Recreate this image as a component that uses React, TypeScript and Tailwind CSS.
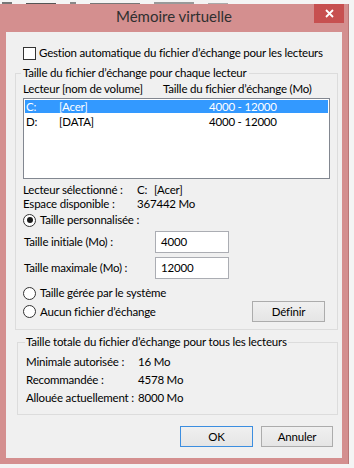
const ui = "font-['Lato',sans-serif] text-[11.5px] tracking-[-0.2px] text-black"

const Radio = ({ checked = false }: { checked?: boolean }) => (
  <span className="w-[13px] h-[13px] rounded-full border border-[#333] bg-white flex items-center justify-center shrink-0">
    {checked && <span className="w-[6px] h-[6px] rounded-full bg-[#1a1a1a]" />}
  </span>
)

const Button = ({ label, focused = false, w }: { label: string; focused?: boolean; w: string }) => (
  <button
    className={`${w} h-[21px] border ${
      focused ? "border-[#3c8ee0]" : "border-[#acacac]"
    } bg-gradient-to-b from-[#f0f0f0] to-[#e5e5e5] flex items-center justify-center leading-none`}
  >
    {label}
  </button>
)

const App = () => {
  return (
    <div className={`w-[354px] h-[468px] bg-[#f4f4f4] overflow-hidden ${ui}`}>
      {/* fragments of the window behind */}
      <div className="h-[4px] flex items-end gap-[14px] pl-[2px]">
        <span className="w-[10px] h-[2px] bg-[#777]" />
        <span className="w-[30px] h-[1px] bg-[#555]" />
        <span className="w-[6px] h-[2px] bg-[#888]" />
        <span className="w-[50px] h-[1px] bg-[#777]" />
        <span className="w-[40px] h-[2px] bg-[#999]" />
        <span className="w-[20px] h-[1px] bg-[#aaa]" />
      </div>

      <div className="w-[349px] h-[460px] bg-[#d48f8f] border-r border-[#b97777] flex flex-col">
        {/* title bar */}
        <div className="h-[28px] relative flex items-center justify-center pb-[4px]">
          <span className="text-[15px] tracking-normal text-[#2f2f2f]">Mémoire virtuelle</span>
          <div className="absolute right-[4px] top-0 w-[30px] h-[19px] bg-[#c75050] flex items-center justify-center">
            <svg width="9" height="9" viewBox="0 0 9 9">
              <path d="M1 1 L8 8 M8 1 L1 8" stroke="white" strokeWidth="1.8" />
            </svg>
          </div>
        </div>

        {/* client area */}
        <div className="mx-[6px] h-[426px] bg-[#f0f0f0] flex flex-col">
          <div className="mt-[13px] ml-[17px] h-[16px] flex items-center gap-[3px]">
            <span className="w-[13px] h-[13px] border border-[#333] bg-white shrink-0" />
            <span className="whitespace-nowrap">Gestion automatique du fichier d’échange pour les lecteurs</span>
          </div>

          <fieldset className="mt-[4px] ml-[9px] w-[323px] border border-[#dcdcdc] pl-[5px] pr-[7px] pb-[7px]">
            <legend className="px-[2px] leading-[16px]">Taille du fichier d’échange pour chaque lecteur</legend>
            <div className="pl-[2px]">
              <div className="flex leading-[16px] whitespace-nowrap">
                <span className="w-[140px]">Lecteur [nom de volume]</span>
                <span>Taille du fichier d’échange (Mo)</span>
              </div>
              <div className="mt-[1px] h-[81px] border border-[#828790] bg-white pt-[1px] px-[1px] flex flex-col gap-[2px]">
                <div className="h-[13px] leading-[13px] bg-[#3399ff] text-white flex pl-[1px]">
                  <span className="w-[33px]">C:</span>
                  <span className="w-[150px]">[Acer]</span>
                  <span>4000 - 12000</span>
                </div>
                <div className="h-[13px] leading-[13px] flex pl-[1px]">
                  <span className="w-[33px]">D:</span>
                  <span className="w-[150px]">[DATA]</span>
                  <span>4000 - 12000</span>
                </div>
              </div>

              <div className="mt-[4px] flex leading-[14px] whitespace-nowrap">
                <span className="w-[114px]">Lecteur sélectionné :</span>
                <span className="w-[17px]">C:</span>
                <span>[Acer]</span>
              </div>
              <div className="flex leading-[14px] whitespace-nowrap">
                <span className="w-[114px]">Espace disponible :</span>
                <span>367442 Mo</span>
              </div>

              <div className="mt-[2px] h-[14px] flex items-center gap-[4px]">
                <Radio checked />
                <span>Taille personnalisée :</span>
              </div>

              <div className="mt-[4px] h-[22px] flex items-center">
                <span className="w-[132px] pl-[1px] whitespace-nowrap">Taille initiale (Mo) :</span>
                <div className="w-[74px] h-[22px] border border-[#abadb3] bg-white pl-[5px] flex items-center">4000</div>
              </div>
              <div className="mt-[4px] h-[22px] flex items-center">
                <span className="w-[132px] pl-[1px] whitespace-nowrap">Taille maximale (Mo) :</span>
                <div className="w-[74px] h-[22px] border border-[#abadb3] bg-white pl-[5px] flex items-center">12000</div>
              </div>

              <div className="mt-[7px] h-[14px] flex items-center gap-[4px]">
                <Radio />
                <span>Taille gérée par le système</span>
              </div>
              <div className="mt-[1px] h-[21px] flex items-center">
                <div className="flex items-center gap-[4px] flex-1">
                  <Radio />
                  <span>Aucun fichier d’échange</span>
                </div>
                <Button label="Définir" w="w-[73px]" />
                <span className="w-[5px]" />
              </div>
            </div>
          </fieldset>

          <fieldset className="mt-[4px] ml-[11px] w-[321px] border border-[#dcdcdc] pl-[8px] pb-[7px]">
            <legend className="px-[1px] -ml-[1px] leading-[16px] whitespace-nowrap">Taille totale du fichier d’échange pour tous les lecteurs</legend>
            <div className="mt-[3px] flex flex-col leading-[18px] whitespace-nowrap">
              <div className="flex">
                <span className="w-[112px]">Minimale autorisée :</span>
                <span>16 Mo</span>
              </div>
              <div className="flex">
                <span className="w-[112px]">Recommandée :</span>
                <span>4578 Mo</span>
              </div>
              <div className="flex">
                <span className="w-[112px]">Allouée actuellement :</span>
                <span>8000 Mo</span>
              </div>
            </div>
          </fieldset>

          <div className="mt-[11px] mr-[9px] flex justify-end gap-[8px]">
            <Button label="OK" focused w="w-[73px]" />
            <Button label="Annuler" w="w-[72px]" />
          </div>
        </div>
      </div>
    </div>
  )
}

export default App
